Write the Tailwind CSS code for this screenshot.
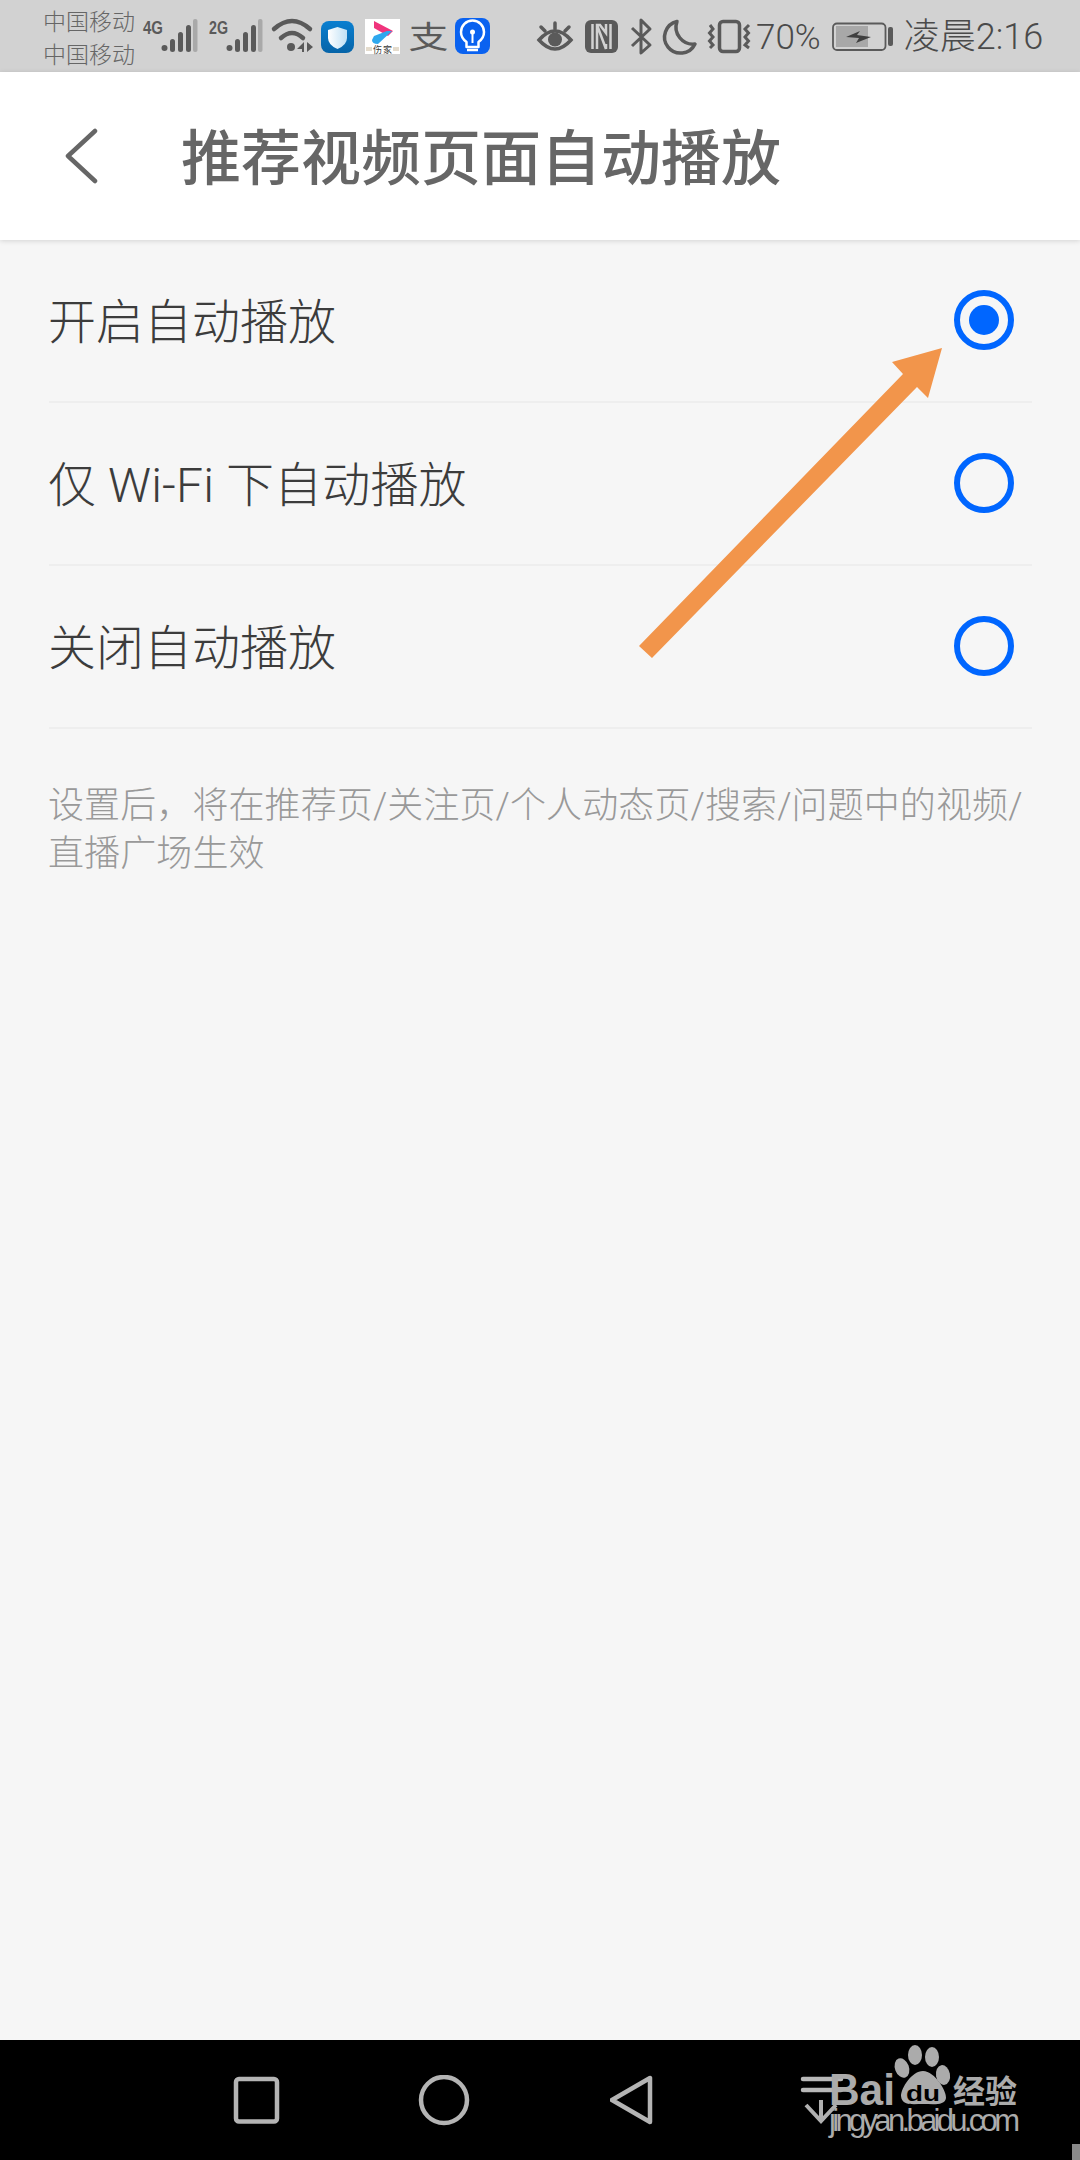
<!doctype html>
<html lang="zh-CN">
<head>
<meta charset="utf-8">
<script src="https://cdn.jsdelivr.net/npm/@tailwindcss/browser@4"></script>
</head>
<body class="m-0 bg-[#f6f6f6]">
<div class="relative flex h-[2160px] w-[1080px] flex-col overflow-hidden bg-[#f6f6f6] font-['Roboto','Noto_Sans_CJK_SC',sans-serif]">

  <!-- status bar -->
  <div class="flex h-[72px] shrink-0 items-start bg-[#d2d2d2] text-[#5a5a5a]">
    <div class="ml-[43px] mt-[4px] w-[97px] text-[23px] leading-[33px] text-[#666666] font-['Noto_Sans_CJK_SC',sans-serif] font-light">
      <div>中国移动</div><div>中国移动</div>
    </div>
    <svg class="block shrink-0" width="360" height="72" viewBox="140 0 360 72" fill="#5a5a5a">
      <text x="143" y="34" font-family="Liberation Sans" font-weight="700" font-size="19" textLength="20" lengthAdjust="spacingAndGlyphs">4G</text>
      <circle cx="164.500" cy="48" r="3"/>
      <rect x="170" y="39" width="5" height="13" rx="2.500"/><rect x="178" y="32" width="5" height="20" rx="2.500"/><rect x="186" y="25" width="5" height="27" rx="2.500"/><rect x="193" y="19" width="4.500" height="33" rx="2" fill="#a9a9a9"/>
      <text x="209" y="34" font-family="Liberation Sans" font-weight="700" font-size="19" textLength="19" lengthAdjust="spacingAndGlyphs">2G</text>
      <circle cx="229.500" cy="48" r="3"/>
      <rect x="235" y="39" width="5" height="13" rx="2.500"/><rect x="243" y="32" width="5" height="20" rx="2.500"/><rect x="251" y="25" width="5" height="27" rx="2.500"/><rect x="258" y="19" width="4.500" height="33" rx="2" fill="#a9a9a9"/>
      <g fill="none" stroke="#5a5a5a" stroke-width="4.500" stroke-linecap="round">
        <path d="M274 29 Q292 13 310 29"/><path d="M281 38 Q292 28 303 38"/>
      </g>
      <circle cx="291" cy="47" r="4"/>
      <path d="M304 42v10h-2v-3h-5zM307 42l6 5-6 5z"/>

      <defs>
        <linearGradient id="sh" x1="0" y1="0" x2="0" y2="1"><stop offset="0" stop-color="#0a7fd0"/><stop offset="1" stop-color="#0664a8"/></linearGradient>
        <linearGradient id="sh2" x1="0" y1="0" x2="1" y2="0"><stop offset="0" stop-color="#ffffff"/><stop offset="1" stop-color="#bfe0f5"/></linearGradient>
      </defs>
      <rect x="321" y="21" width="33" height="32" rx="8" fill="url(#sh)"/>
      <path d="M337.500 27 L347 30 V38 Q347 45 337.500 49 Q328 45 328 38 V30 Z" fill="url(#sh2)"/>

      <rect x="365" y="19" width="35" height="35" fill="#ffffff"/>
      <path d="M374 21 L393 31 L388 36 L374 28Z" fill="#f0347c"/>
      <path d="M374 36 L387 31 L392 31 L378 44 Q372 44 372 40Z" fill="#2fa8ee"/>
      <path d="M366 48h6M366 50h6M393 48h6M393 50h6" stroke="#c9b89a" stroke-width="1"/>
      <text x="373" y="53" font-family="Noto Sans CJK SC" font-size="9" fill="#3a3a3a" textLength="19">伤家</text>

      <text x="0" y="0" transform="translate(408.500 47.500) scale(1 0.76)" font-family="Noto Sans CJK SC" font-weight="400" font-size="40" fill="#5a5a5a">支</text>

      <rect x="455" y="18" width="35" height="36" rx="8" fill="#0a62f0"/>
      <path d="M466.500 42 Q461 38 461 32 A11.500 11.500 0 0 1 484 32 Q484 38 478.500 42 V47 H466.500 Z" fill="none" stroke="#ffffff" stroke-width="2.500" stroke-linejoin="round"/>
      <path d="M472.500 33V43" stroke="#ffffff" stroke-width="2"/><circle cx="472.500" cy="32" r="2.500" fill="#ffffff"/>
      <path d="M467 50H478" stroke="#ffffff" stroke-width="2.500"/>
    </svg>

    <svg class="ml-[30px] block shrink-0" width="222" height="72" viewBox="530 0 222 72" fill="#5a5a5a">
      <g fill="none" stroke="#5a5a5a" stroke-width="3.500" stroke-linecap="round">
        <path d="M539 40 Q555 22 571 40 Q555 58 539 40Z"/>
        <path d="M555 23V29M541 27L545 31M569 27L565 31"/>
      </g>
      <circle cx="555" cy="39.500" r="7"/>

      <rect x="585" y="20" width="33" height="33" rx="6"/>
      <path d="M592.500 24 V49 M610.500 24 V49" stroke="#d2d2d2" stroke-width="2.500"/>
      <path d="M597 49 V25 H600 L606 33 V24 M606 49 V44 M597 25 L606 49" fill="none" stroke="#d2d2d2" stroke-width="2.500"/>

      <path d="M632 28 L650 45 L641 53 V20 L650 29 L632 46" fill="none" stroke="#5a5a5a" stroke-width="3" stroke-linejoin="round"/>

      <path d="M677 21.500 A16 16 0 1 0 695 44 A17 17 0 0 1 677 21.500Z" fill="none" stroke="#5a5a5a" stroke-width="3.500" stroke-linejoin="round"/>

      <rect x="719.500" y="21.500" width="20" height="30" rx="3.500" fill="none" stroke="#5a5a5a" stroke-width="3.500"/>
      <path d="M710 25 L713 29 L709.500 33 L713 37 L709.500 41 L713 45 L710 48 M749 25 L745 29 L748.500 33 L745 37 L748.500 41 L745 45 L749 48" fill="none" stroke="#5a5a5a" stroke-width="3"/>
    </svg>

    <span class="ml-[4px] mt-[17px] text-[35px] leading-[41px] font-light text-[#4a4a4a]">70%</span>

    <svg class="ml-[11px] block shrink-0" width="62" height="72" viewBox="832 0 62 72">
      <rect x="833" y="23.500" width="52.500" height="26.500" rx="4" fill="none" stroke="#5a5a5a" stroke-width="1.800"/>
      <rect x="836" y="26" width="32" height="21" fill="#a8a8a8"/>
      <path d="M846 37 L860 31 L857 35 L871 37 L856 43 L859 38Z" fill="#3f3f3f"/>
      <rect x="888" y="27" width="5" height="19" rx="2" fill="#5a5a5a"/>
    </svg>

    <span class="ml-[10px] mt-[17px] whitespace-nowrap text-[36px] leading-[41px] text-[#4a4a4a] font-light">凌晨2:16</span>
  </div>

  <!-- header -->
  <header class="relative z-10 flex h-[168px] shrink-0 items-center bg-white shadow-[0_1px_5px_rgba(0,0,0,0.14)]">
    <svg class="ml-[65px] block shrink-0" width="34" height="56" viewBox="64 128 34 56">
      <path d="M94 131 L67 156 L94 181" fill="none" stroke="#666666" stroke-width="4.500" stroke-linecap="round" stroke-linejoin="round"/>
    </svg>
    <h1 class="ml-[82px] -mt-[4px] text-[60px] leading-none font-medium whitespace-nowrap text-[#666666] font-['Noto_Sans_CJK_SC',sans-serif]">推荐视频页面自动播放</h1>
  </header>

  <!-- options -->
  <main class="flex-1 pl-[49px] pr-[48px] font-['Roboto','Noto_Sans_CJK_SC',sans-serif]">
    <div class="flex h-[163px] items-center justify-between border-b-2 border-[#eeeeee] pr-[18px] text-[48px] font-light text-[#3c3c3c]">
      <span class="-ml-[1px] mt-[5px] leading-none">开启自动播放</span>
      <span class="-mt-[1px] flex h-[60px] w-[60px] items-center justify-center rounded-full border-[6px] border-[#0066ff]"><span class="h-[30px] w-[30px] rounded-full bg-[#0066ff]"></span></span>
    </div>
    <div class="flex h-[163px] items-center justify-between border-b-2 border-[#eeeeee] pr-[18px] text-[48px] font-light text-[#3c3c3c]">
      <span class="-ml-[1px] mt-[5px] leading-none whitespace-nowrap tracking-[0.15px]">仅 Wi-Fi 下自动播放</span>
      <span class="-mt-[1px] h-[60px] w-[60px] rounded-full border-[6px] border-[#0066ff]"></span>
    </div>
    <div class="flex h-[163px] items-center justify-between border-b-2 border-[#eeeeee] pr-[18px] text-[48px] font-light text-[#3c3c3c]">
      <span class="-ml-[1px] mt-[5px] leading-none">关闭自动播放</span>
      <span class="-mt-[1px] h-[60px] w-[60px] rounded-full border-[6px] border-[#0066ff]"></span>
    </div>
    <p class="-ml-[1px] mt-[53px] text-[36px] leading-[48px] whitespace-nowrap font-light tracking-[0.1px] text-[#999999]">设置后，将在推荐页/关注页/个人动态页/搜索/问题中的视频/<br>直播广场生效</p>
  </main>

  <!-- nav bar -->
  <nav class="relative flex h-[120px] shrink-0 items-start bg-black">
    <svg class="ml-[232px] mt-[35px] block shrink-0" width="50" height="50" viewBox="232 2075 50 50">
      <rect x="236" y="2079" width="41" height="42.500" rx="3" fill="none" stroke="#b4b4b4" stroke-width="4.500"/>
    </svg>
    <svg class="ml-[136px] mt-[35px] block shrink-0" width="52" height="52" viewBox="418 2075 52 52">
      <circle cx="444" cy="2100" r="23" fill="none" stroke="#b4b4b4" stroke-width="4.500"/>
    </svg>
    <svg class="ml-[140px] mt-[33px] block shrink-0" width="46" height="56" viewBox="610 2073 46 56">
      <path d="M650 2078 V2122 L612 2100 Z" fill="none" stroke="#b4b4b4" stroke-width="4.500" stroke-linejoin="round"/>
    </svg>
    <svg class="ml-[144px] block shrink-0" width="280" height="120" viewBox="800 2040 280 120" fill="#ababab">
      <path d="M803 2079H841M803 2090H841" stroke="#b8b8b8" stroke-width="4.500" stroke-linecap="round"/>
      <path d="M821 2100V2121M806 2105L821 2121L836 2105" fill="none" stroke="#b0b0b0" stroke-width="4"/>
      <ellipse cx="915" cy="2055" rx="7" ry="10"/>
      <ellipse cx="932" cy="2057" rx="7" ry="10"/>
      <ellipse cx="902" cy="2068" rx="7" ry="10" transform="rotate(-20 902 2068)"/>
      <ellipse cx="943" cy="2075" rx="7" ry="10" transform="rotate(-10 943 2075)"/>
      <path d="M923 2071 C935 2071 947 2092 946 2098 C945 2106 933 2104 923 2104 C912 2104 902 2106 901 2096 C901 2088 912 2071 923 2071Z"/>
      <text x="906" y="2101" font-family="Liberation Sans" font-weight="700" font-size="22" fill="#000000" textLength="34" lengthAdjust="spacingAndGlyphs">du</text>
      <text x="829" y="2105" font-family="Liberation Sans" font-weight="700" font-size="44" textLength="66" lengthAdjust="spacingAndGlyphs">Bai</text>
      <text x="953" y="2103" font-family="Noto Sans CJK SC" font-weight="700" font-size="32">经验</text>
      <text x="829" y="2131" font-family="Liberation Sans" font-size="31" textLength="191">jingyan.baidu.com</text>
    </svg>
    <span class="absolute bottom-0 right-0 h-4 w-2 bg-[#8a8a8a]"></span>
  </nav>

  <!-- annotation arrow -->
  <svg class="absolute left-0 top-0" width="1080" height="2160" viewBox="0 0 1080 2160">
    <path d="M639 646 L903 374 L892 362 L942 348 L928 398 L917 387 L652 658 Z" fill="#f2954b"/>
  </svg>
</div>
</body>
</html>
